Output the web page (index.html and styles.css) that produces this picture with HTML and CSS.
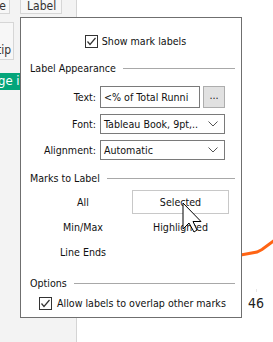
FILE: index.html
```html
<!DOCTYPE html>
<html lang="en">
<head>
    <meta charset="UTF-8">
    <title>Label Marks</title>
    <link rel="stylesheet" href="styles.css">
</head>
<body>
    <div class="workspace">
        <div class="sidebar">
            <div class="shelf-row">
                <div class="shelf-btn cut">e</div>
                <div class="shelf-btn label">Label</div>
            </div>
            <div class="card">tip</div>
            <div class="pill">ge in</div>
        </div>
        <div class="chart"></div>
    </div>

    <svg class="trend" width="273" height="342" viewBox="0 0 273 342">
        <polyline points="238,255.5 257,252 262,249.5 275,240" fill="none" stroke="#ff6414" stroke-width="3"/>
        <line x1="256.5" y1="289" x2="256.5" y2="292" stroke="#e6e6e6"/>
    </svg>
    <div class="value">46</div>

    <div class="dialog">
        <div class="show-row">
            <span class="check"><svg width="11" height="11" viewBox="0 0 11 11"><polyline points="1.5,5.5 4,8.5 9.5,2" fill="none" stroke="#333" stroke-width="1.2"/></svg></span>
            <span>Show mark labels</span>
        </div>

        <div class="section">Label Appearance</div>
        <div class="form">
            <label>Text:</label>
            <div class="text-ctl">
                <div class="field">&lt;% of Total Runni</div>
                <div class="dots">...</div>
            </div>
            <label>Font:</label>
            <div class="select">Tableau Book, 9pt,..
                <svg width="10" height="6" viewBox="0 0 10 6"><polyline points="0.5,0.5 5,5 9.5,0.5" fill="none" stroke="#555"/></svg>
            </div>
            <label>Alignment:</label>
            <div class="select">Automatic
                <svg width="10" height="6" viewBox="0 0 10 6"><polyline points="0.5,0.5 5,5 9.5,0.5" fill="none" stroke="#555"/></svg>
            </div>
        </div>

        <div class="section">Marks to Label</div>
        <div class="marks">
            <div class="mark">All</div>
            <div class="mark selected">Selected</div>
            <div class="mark">Min/Max</div>
            <div class="mark">Highlighted</div>
            <div class="mark">Line Ends</div>
            <div class="mark"></div>
        </div>

        <div class="section">Options</div>
        <div class="allow-row">
            <span class="check"><svg width="11" height="11" viewBox="0 0 11 11"><polyline points="1.5,5.5 4,8.5 9.5,2" fill="none" stroke="#333" stroke-width="1.2"/></svg></span>
            <span>Allow labels to overlap other marks</span>
        </div>
    </div>

    <svg class="cursor" width="22" height="32" viewBox="0 0 22 32">
        <polygon points="1,1 1,27 7,21 12,30 15,28 11,19.5 19,19.5" fill="#fff" stroke="#000" stroke-width="1"/>
    </svg>
</body>
</html>
```

FILE: styles.css
```css
body {
    margin: 0;
    width: 273px;
    height: 342px;
    overflow: hidden;
    position: relative;
    background: #fff;
    font-family: "DejaVu Sans", sans-serif;
    font-stretch: condensed;
    font-size: 10.6px;
    color: #111;
}
.workspace {
    display: flex;
    height: 342px;
}
.sidebar {
    width: 76px;
    flex-shrink: 0;
    background: #f3f3f3;
    border-right: 1px solid #d4d4d4;
    overflow: hidden;
}
.shelf-row {
    display: flex;
    gap: 10px;
    height: 14px;
    margin-left: -30px;
}
.shelf-btn {
    box-sizing: border-box;
    background: #f7f7f7;
    border: 1px solid #d6d6d6;
    border-top: none;
    height: 14px;
    line-height: 12px;
    color: #333;
    font-size: 12px;
}
.shelf-btn.cut {
    width: 40px;
    text-align: right;
    padding-right: 3px;
}
.shelf-btn.label {
    width: 42px;
    padding-left: 6px;
}
.card {
    margin: 8px 0 0 -30px;
    width: 44px;
    height: 38px;
    background: #f7f7f7;
    border: 1px solid #d6d6d6;
    color: #333;
    box-sizing: border-box;
    display: flex;
    align-items: flex-end;
    justify-content: flex-end;
    padding: 0 2px 1px 0;
    font-size: 12px;
    line-height: 16px;
}
.pill {
    margin: 13px 0 0 0;
    height: 17px;
    width: 60px;
    background: #04a57a;
    color: #fff;
    font-size: 13px;
    line-height: 16px;
    white-space: nowrap;
    text-indent: -2px;
}
.chart {
    flex: 1;
}
.trend {
    position: absolute;
    left: 0;
    top: 0;
}
.value {
    position: absolute;
    left: 248px;
    top: 295px;
    font-size: 14px;
    color: #222;
}
.dialog {
    position: absolute;
    left: 20px;
    top: 17px;
    width: 222px;
    height: 301px;
    box-sizing: border-box;
    background: #fff;
    border: 1px solid #6f6f6f;
    padding: 14px 6px 0 9px;
}
.check {
    width: 13px;
    height: 13px;
    box-sizing: border-box;
    border: 1px solid #333;
    background: #fff;
    display: flex;
    align-items: center;
    justify-content: center;
}
.show-row {
    display: flex;
    align-items: center;
    justify-content: center;
    gap: 4px;
    height: 18px;
    margin-right: -6px;
}
.section {
    display: flex;
    align-items: center;
    gap: 7px;
    height: 16px;
    margin-top: 10px;
}
.section::after {
    content: "";
    flex: 1;
    border-top: 1px solid #a8a8a8;
}
.form {
    display: grid;
    grid-template-columns: 66px 125px;
    column-gap: 4px;
    row-gap: 6px;
    margin-top: 10px;
    align-items: center;
}
.form label {
    text-align: right;
}
.text-ctl {
    display: flex;
    gap: 3px;
    height: 22px;
}
.field {
    width: 100px;
    box-sizing: border-box;
    border: 1px solid #7a7a7a;
    padding: 0 3px;
    line-height: 20px;
    white-space: nowrap;
    overflow: hidden;
}
.dots {
    width: 22px;
    box-sizing: border-box;
    background: #e1e1e1;
    border: 1px solid #adadad;
    text-align: center;
    line-height: 17px;
}
.select {
    height: 20px;
    box-sizing: border-box;
    border: 1px solid #7a7a7a;
    padding: 0 6px 0 3px;
    line-height: 18px;
    display: flex;
    justify-content: space-between;
    align-items: center;
    white-space: nowrap;
}
.marks {
    display: grid;
    grid-template-columns: 98px 97px;
    grid-auto-rows: 25px;
    margin-top: 4px;
    margin-left: 4px;
}
.mark {
    display: flex;
    align-items: center;
    justify-content: center;
    height: 24px;
}
.mark.selected {
    border: 1px solid #c8c8c8;
    box-sizing: border-box;
}
.allow-row {
    display: flex;
    align-items: center;
    gap: 5px;
    height: 16px;
    margin-top: 4px;
    padding-left: 9px;
}
.cursor {
    position: absolute;
    left: 182px;
    top: 202px;
}
```
